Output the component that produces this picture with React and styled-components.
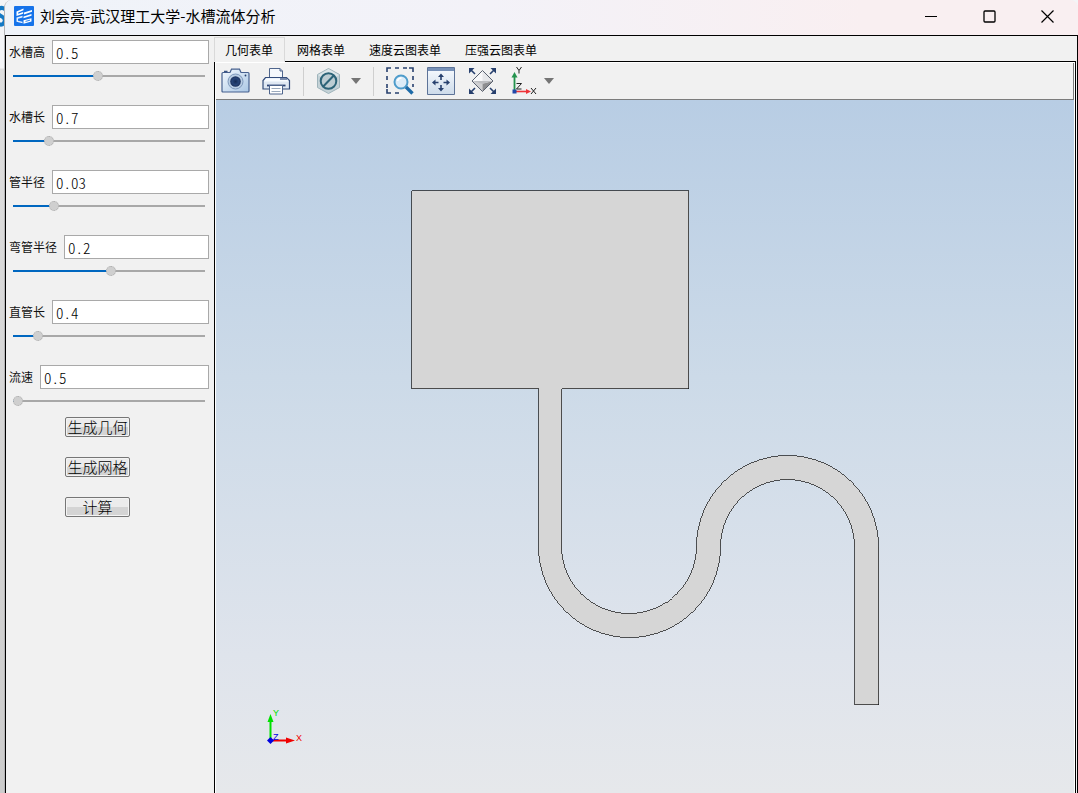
import React, { useState } from 'react';
import styled, { createGlobalStyle, css } from 'styled-components';

const GlobalStyle = createGlobalStyle`
  * {
    box-sizing: border-box;
  }

  body {
    margin: 0;
    color: #111;
    font-family: 'Noto Sans CJK SC', sans-serif;
    font-size: 12px;
  }
`;

const Desktop = styled.div`
  position: relative;
  min-height: 100vh;
  display: flex;
  padding-left: 4px;
  background: linear-gradient(to bottom, #f4f5f7 0, #f4f5f7 68px, #dedede 69px, #cccccc 100%);
`;

const Backdrop = styled.svg`
  position: absolute;
  top: 0;
  left: 0;
`;

const Window = styled.div`
  position: relative;
  flex: 1;
  min-width: 0;
  display: flex;
  flex-direction: column;
  border-left: 1px solid #b4b4b6;
  border-radius: 8px 8px 0 0;
  overflow: hidden;
  background: #f1f1f1;
`;

const TitleBar = styled.header`
  display: flex;
  align-items: center;
  height: 35px;
  padding: 0 2px 3px 9px;
  background: linear-gradient(to right, #eff3f9, #f3f2f8 45%, #f9eff1 80%);
`;

const Title = styled.h1`
  flex: 1;
  margin: 0 0 0 6px;
  font-size: 15px;
  font-weight: 400;
  line-height: 20px;
  color: #000;
`;

const WindowButton = styled.button`
  display: flex;
  align-items: center;
  justify-content: center;
  width: 58px;
  height: 32px;
  padding: 0;
  border: 0;
  background: none;
`;

const Body = styled.div`
  flex: 1;
  display: flex;
  border: 1px solid #000;
  border-bottom: 0;
`;

const Sidebar = styled.form`
  width: 208px;
  padding: 4px 5px 0 3px;
`;

const Field = styled.div`
  margin-bottom: 24px;

  &:last-of-type {
    margin-bottom: 11px;
  }
`;

const FieldRow = styled.div`
  display: flex;
  align-items: center;
  gap: 7px;
  height: 24px;
  margin-bottom: 7px;
`;

const Label = styled.label`
  flex: none;
  line-height: 24px;
`;

const TextInput = styled.input`
  flex: 1;
  min-width: 0;
  height: 24px;
  padding: 1px 3px 0;
  border: 1px solid #a9a9a9;
  background: #fff;
  color: #000;
  font-family: 'Noto Sans CJK SC', sans-serif;
  font-size: 15px;
  font-weight: 300;
  font-feature-settings: 'hwid';
  outline: none;
`;

const Slider = styled.input.attrs(({ value }) => ({
  type: 'range',
  // thumb is 10px wide, so the fill stops at its center
  style: { '--fill': `calc(5px + (100% - 10px) * ${value / 100})` },
}))`
  appearance: none;
  display: block;
  width: calc(100% - 8px);
  height: 10px;
  margin: 0 4px;
  background:
    linear-gradient(#0067c0, #0067c0) 0 4px / var(--fill) 2px no-repeat,
    linear-gradient(#a8a8a8, #a8a8a8) 0 4px / 100% 2px no-repeat;

  &::-webkit-slider-thumb {
    appearance: none;
    width: 10px;
    height: 10px;
    border: 1px dotted #aaa;
    border-radius: 50%;
    background: #cfcfcf;
  }
`;

const Actions = styled.section`
  display: flex;
  flex-direction: column;
  align-items: flex-start;
  gap: 20px;
  padding-left: 56px;
`;

const ActionButton = styled.button`
  width: 65px;
  height: 20px;
  padding: 0;
  border: 1px solid #767676;
  border-radius: 2px;
  box-shadow: inset 0 0 0 1px #f4f4f4;
  background: linear-gradient(#ececec 50%, #d4d4d4 50%);
  color: #000;
  font-family: inherit;
  font-size: 15px;
  font-weight: 300;
  line-height: 16px;
  white-space: nowrap;
`;

const Main = styled.main`
  flex: 1;
  min-width: 0;
  display: flex;
  flex-direction: column;
  padding-right: 1px;
`;

const TabList = styled.div`
  display: flex;
  height: 25px;
`;

const Tab = styled.button`
  height: 25px;
  padding: 2px 12px 0;
  border: 0;
  background: none;
  color: #000;
  font-family: inherit;
  font-size: 12px;
  line-height: 20px;
  white-space: nowrap;

  ${({ $active }) =>
    $active &&
    css`
      position: relative;
      margin-top: 1px;
      padding: 0 11px 0 10px;
      border: 1px solid #d9d9d9;
      border-bottom-color: #f1f1f1;
      background: #f1f1f1;
    `}
`;

const Panel = styled.section`
  flex: 1;
  display: flex;
  flex-direction: column;
  padding: 1px 1px 0;
  border: 1px solid #000;
  border-bottom: 0;
  background: #fff;
`;

const Toolbar = styled.div`
  display: flex;
  align-items: center;
  gap: 12px;
  height: 37px;
  padding-left: 5px;
  border-right: 1px solid #7c7c7c;
  border-bottom: 1px solid #7c7c7c;
  background: #f1f1f1;
`;

const ToolButton = styled.button`
  display: flex;
  align-items: center;
  justify-content: center;
  width: 29px;
  height: 30px;
  padding: 0;
  border: 0;
  background: none;
`;

const MenuArrow = styled(ToolButton)`
  width: 10px;
  margin-left: -6px;
`;

const Separator = styled.span`
  width: 1px;
  height: 29px;
  background: #cfcfcf;
`;

const Viewport = styled.div`
  position: relative;
  flex: 1;
  display: flex;
  background: linear-gradient(to bottom, #b8cde4, #ccdae8 40%, #dfe4ec 80%, #e6e8eb);
`;

const Drawing = styled.svg`
  flex: 1;
  display: block;
  min-height: 640px;
`;

const Triad = styled.svg`
  position: absolute;
  left: 50px;
  bottom: 46px;
  font-family: 'Liberation Sans', sans-serif;
  font-size: 9px;
`;

const fields = [
  { id: 'tankHeight', label: '水槽高', value: '0.5', position: 44 },
  { id: 'tankLength', label: '水槽长', value: '0.7', position: 17 },
  { id: 'pipeRadius', label: '管半径', value: '0.03', position: 20 },
  { id: 'bendRadius', label: '弯管半径', value: '0.2', position: 51 },
  { id: 'pipeLength', label: '直管长', value: '0.4', position: 11 },
  { id: 'velocity', label: '流速', value: '0.5', position: 0 },
];

const tabs = ['几何表单', '网格表单', '速度云图表单', '压强云图表单'];

const actions = ['生成几何', '生成网格', '计算'];

const AppLogo = () => (
  <svg width="20" height="20" viewBox="0 0 20 20">
    <rect width="20" height="20" rx="1" fill="#1673ea" />
    <path d="M2.500 5.500 9.500 2.500v1.800L4.200 6.600v1.200l5-1.700v1.600L2.500 10z" fill="#fff" />
    <path d="M2.500 11.500 8.500 9.800v1.600L4 12.700v2l4.500 1v1.600L2.500 15.800z" fill="#e4f0ff" />
    <path d="M10 6.500 18 4v1.800l-8 2.600zM9.500 10.400 17.500 8v1.800l-8 2.400zM9.500 14.200l8-2v3.300l-8 2.200z" fill="#fff" />
    <path d="m11.500 15.400 4.500-1.200" stroke="#1673ea" strokeWidth=".9" />
  </svg>
);

const CameraIcon = () => (
  <svg width="29" height="28" viewBox="0 0 29 28">
    <defs>
      <linearGradient id="cameraBody" x1="0" y1="0" x2="1" y2="1">
        <stop offset="0" stopColor="#f5faff" />
        <stop offset="1" stopColor="#a9c6e4" />
      </linearGradient>
      <radialGradient id="cameraLens">
        <stop offset="0" stopColor="#162c56" />
        <stop offset=".6" stopColor="#274477" />
        <stop offset="1" stopColor="#1c315c" />
      </radialGradient>
    </defs>
    <path
      d="M2 5.500h7L10.500 2.200h8l1.500 3.300h7q1 0 1 1V24q0 1-1 1H2q-1 0-1-1V6.500q0-1 1-1z"
      fill="url(#cameraBody)"
      stroke="#47618f"
      strokeWidth="1.2"
    />
    <path d="M3 4.500h3.500" stroke="#3a5484" strokeWidth="1.4" />
    <circle cx="14.500" cy="14.500" r="7.500" fill="#b9cde3" stroke="#6d89b0" strokeWidth=".8" />
    <circle cx="14.500" cy="14.500" r="5.300" fill="url(#cameraLens)" />
    <circle cx="24.500" cy="8.500" r=".9" fill="#27406e" />
  </svg>
);

const PrinterIcon = () => (
  <svg width="29" height="28" viewBox="0 0 29 28">
    <path d="M7.500 11V1.500H18L20.500 4v7" fill="#f5f8fc" stroke="#4f658c" />
    <path d="M18 1.500V4h2.500" fill="#b8c7dc" stroke="#4f658c" />
    <path d="M3.500 10.500h21l3 3V22H1v-8.500z" fill="#dfe8f3" stroke="#334c7b" strokeWidth="1.2" />
    <path d="M4 11.500h20.500l2 3H2z" fill="#f8fbff" />
    <path d="M18 12h7" stroke="#2b4475" strokeWidth="1.2" />
    <path d="M5 18.500h18.500" stroke="#2b4475" strokeWidth="1.8" />
    <path d="M7.500 18.500h13V27h-13z" fill="#fff" stroke="#4f658c" />
    <path d="M9.500 21.500h9M9.500 24.500h9" stroke="#9baabd" />
  </svg>
);

const HideIcon = () => (
  <svg width="29" height="28" viewBox="0 0 29 28">
    <path d="M12.500 1.500 23.500 7.500v13l-11 6-11-6v-13z" fill="#c4d2d7" stroke="#9fb4bb" />
    <path d="M12.500 2 2 8l10.500 6L23 8z" fill="#dce6e9" />
    <circle cx="12.500" cy="14" r="7.800" fill="#bccdd3" stroke="#2c6478" strokeWidth="2" />
    <path d="M17.800 8.500 7.200 19.500" stroke="#2c6478" strokeWidth="2" />
  </svg>
);

const ZoomBoxIcon = () => (
  <svg width="29" height="28" viewBox="0 0 29 28" fill="none">
    <path
      d="M1 5V1h4M9 1h4M17 1h4M23 1h4v4M27 9v4M1 9v4M1 17v4M1 22v4h4M9 26h4M27 17v3"
      stroke="#27406e"
      strokeWidth="1.6"
    />
    <circle cx="15" cy="15" r="6.500" fill="#dcecf8" stroke="#4e9ccb" strokeWidth="2" />
    <path d="M11.500 14q.8-3 4-3" stroke="#fff" strokeWidth="1.5" />
    <path d="m20 20 6.500 6.500" stroke="#1e6ba8" strokeWidth="3.400" />
  </svg>
);

const FitIcon = () => (
  <svg width="29" height="28" viewBox="0 0 29 28">
    <defs>
      <linearGradient id="fitFill" x1="0" y1="0" x2="0" y2="1">
        <stop offset="0" stopColor="#f8fbff" />
        <stop offset="1" stopColor="#cddbea" />
      </linearGradient>
    </defs>
    <path d="M.5.500h27v27H.5z" fill="url(#fitFill)" stroke="#5d7398" />
    <path d="M1 1h26v3H1z" fill="#7791b8" />
    <path d="M14 13V9M14 18v4M11.500 15.500h-4M16.500 15.500h4" stroke="#27406e" strokeWidth="1.600" />
    <path
      d="m14 6.500 3 3.500h-6zM14 24.500l3-3.500h-6zM5 15.500l3.500-3v6zM23 15.500l-3.500-3v6z"
      fill="#27406e"
    />
  </svg>
);

const ExtentsIcon = () => (
  <svg width="29" height="28" viewBox="0 0 29 28">
    <path d="M14.500 3.500 25 14H4z" fill="#e6e7ea" />
    <path d="M14.500 3.500V14L4 14z" fill="#f8f8f9" />
    <path d="M14.500 16.500v8L4 14z" fill="#cfcfd1" />
    <path d="M14.500 16.500 25 14 14.500 24.500z" fill="#8e8e90" />
    <path d="M4 14h21l-10.500 3z" fill="#bdbec1" />
    <path d="M14.500 3.500 25 14 14.500 24.500 4 14z" fill="none" stroke="#5b6270" />
    <path d="m2 2 5 5M27 2l-5 5M2 26l5-5M27 26l-5-5" stroke="#27406e" strokeWidth="1.600" />
    <path d="M1 1h5.500L1 6.500zM28 1h-5.500L28 6.500zM1 27h5.500L1 21.500zM28 27h-5.500l5.500-5.500z" fill="#27406e" />
  </svg>
);

const AxesIcon = () => (
  <svg width="29" height="30" viewBox="0 0 29 30" fill="none">
    <path d="M5.500 25V9" stroke="#23934d" strokeWidth="1.800" />
    <path d="m5.500 6 3 5.500h-6z" fill="#23934d" />
    <path d="M5 25.500h12" stroke="#ee3338" strokeWidth="1.600" />
    <path d="m22 25.500-5-2.500v5z" fill="#ee3338" />
    <path d="M3.500 23.500h4v4h-4z" fill="#2349a8" />
    <path d="m7.500 1 2.500 3.500L12.500 1M10 4.500V7.500" stroke="#222" strokeWidth="1" />
    <path d="M7.500 17.500h5l-5 5.500h5" stroke="#222" strokeWidth="1" />
    <path d="m22 22 5 6M27 22l-5 6" stroke="#222" strokeWidth="1" />
  </svg>
);

const ArrowDownIcon = () => (
  <svg width="10" height="6" viewBox="0 0 10 6">
    <path d="M0 0h10L5 6z" fill="#757575" />
  </svg>
);

// Tank with the S-shaped pipe that runs out of its bottom edge
const Geometry = () => (
  <Drawing width="100%" role="img" aria-label="几何">
    <path
      d="M195.500 90.500H472.500V288.500H345.500V446.500A67.500 67 0 0 0 480.500 446.500A91 91 0 0 1 662.500 446.500V604.500H638.500V446.500A67 67 0 0 0 504.500 446.500A91 91 0 0 1 322.500 446.500V288.500H195.500Z"
      fill="#d6d6d6"
      stroke="#111"
      strokeWidth=".7"
      shapeRendering="crispEdges"
    />
  </Drawing>
);

const AxisTriad = () => (
  <Triad width="40" height="38" viewBox="0 0 40 38">
    <path d="M4.500 31V10" stroke="#00e000" strokeWidth="2" />
    <path d="M4.500 5 7.500 13h-6z" fill="#00e000" />
    <path d="M4 31.500h18" stroke="#f00000" strokeWidth="2" />
    <path d="M29 31.500 20 28.500v6z" fill="#f00000" />
    <path d="m4.500 28 3.500 3.500-3.500 3.500L1 31.500z" fill="#0000e0" />
    <text x="7" y="7" fill="#00e000">Y</text>
    <text x="30" y="32" fill="#f00000">X</text>
    <text x="7" y="31" fill="#0000e0">Z</text>
  </Triad>
);

const ParameterField = ({ id, label, value, position }) => {
  const [text, setText] = useState(value);
  const [slider, setSlider] = useState(position);

  return (
    <Field>
      <FieldRow>
        <Label htmlFor={id}>{label}</Label>
        <TextInput id={id} value={text} onChange={e => setText(e.target.value)} />
      </FieldRow>
      <Slider
        aria-label={label}
        min="0"
        max="100"
        value={slider}
        onChange={e => setSlider(Number(e.target.value))}
      />
    </Field>
  );
};

const App = () => {
  const [active, setActive] = useState(0);

  return (
    <>
      <GlobalStyle />
      <Desktop>
        <Backdrop width="14" height="34" viewBox="0 0 14 34">
          <path d="M6 10Q2 6-2 9.500-4 14 1 16q6 3 2.500 7.500Q1 26-3 23" fill="none" stroke="#1579c4" strokeWidth="4" />
        </Backdrop>
        <Window>
          <TitleBar>
            <AppLogo />
            <Title>刘会亮-武汉理工大学-水槽流体分析</Title>
            <WindowButton aria-label="最小化">
              <svg width="13" height="13">
                <path d="M0 6.500h12" stroke="#000" />
              </svg>
            </WindowButton>
            <WindowButton aria-label="最大化">
              <svg width="13" height="13">
                <rect x="1" y="1" width="11" height="11" rx="1" fill="none" stroke="#000" strokeWidth="1.300" />
              </svg>
            </WindowButton>
            <WindowButton aria-label="关闭">
              <svg width="13" height="13">
                <path d="m.5.5 12 12M12.500.5l-12 12" stroke="#000" strokeWidth="1.200" />
              </svg>
            </WindowButton>
          </TitleBar>
          <Body>
            <Sidebar onSubmit={e => e.preventDefault()}>
              {fields.map(field => (
                <ParameterField key={field.id} {...field} />
              ))}
              <Actions>
                {actions.map(action => (
                  <ActionButton key={action} type="button">
                    {action}
                  </ActionButton>
                ))}
              </Actions>
            </Sidebar>
            <Main>
              <TabList role="tablist">
                {tabs.map((tab, i) => (
                  <Tab
                    key={tab}
                    role="tab"
                    aria-selected={i === active}
                    $active={i === active}
                    onClick={() => setActive(i)}
                  >
                    {tab}
                  </Tab>
                ))}
              </TabList>
              <Panel>
                <Toolbar>
                  <ToolButton aria-label="截图">
                    <CameraIcon />
                  </ToolButton>
                  <ToolButton aria-label="打印">
                    <PrinterIcon />
                  </ToolButton>
                  <Separator />
                  <ToolButton aria-label="隐藏">
                    <HideIcon />
                  </ToolButton>
                  <MenuArrow aria-label="隐藏选项">
                    <ArrowDownIcon />
                  </MenuArrow>
                  <Separator />
                  <ToolButton aria-label="框选缩放">
                    <ZoomBoxIcon />
                  </ToolButton>
                  <ToolButton aria-label="适应窗口">
                    <FitIcon />
                  </ToolButton>
                  <ToolButton aria-label="缩放到范围">
                    <ExtentsIcon />
                  </ToolButton>
                  <ToolButton aria-label="视图方向">
                    <AxesIcon />
                  </ToolButton>
                  <MenuArrow aria-label="视图选项">
                    <ArrowDownIcon />
                  </MenuArrow>
                </Toolbar>
                <Viewport>
                  <Geometry />
                  <AxisTriad />
                </Viewport>
              </Panel>
            </Main>
          </Body>
        </Window>
      </Desktop>
    </>
  );
};

export default App;
